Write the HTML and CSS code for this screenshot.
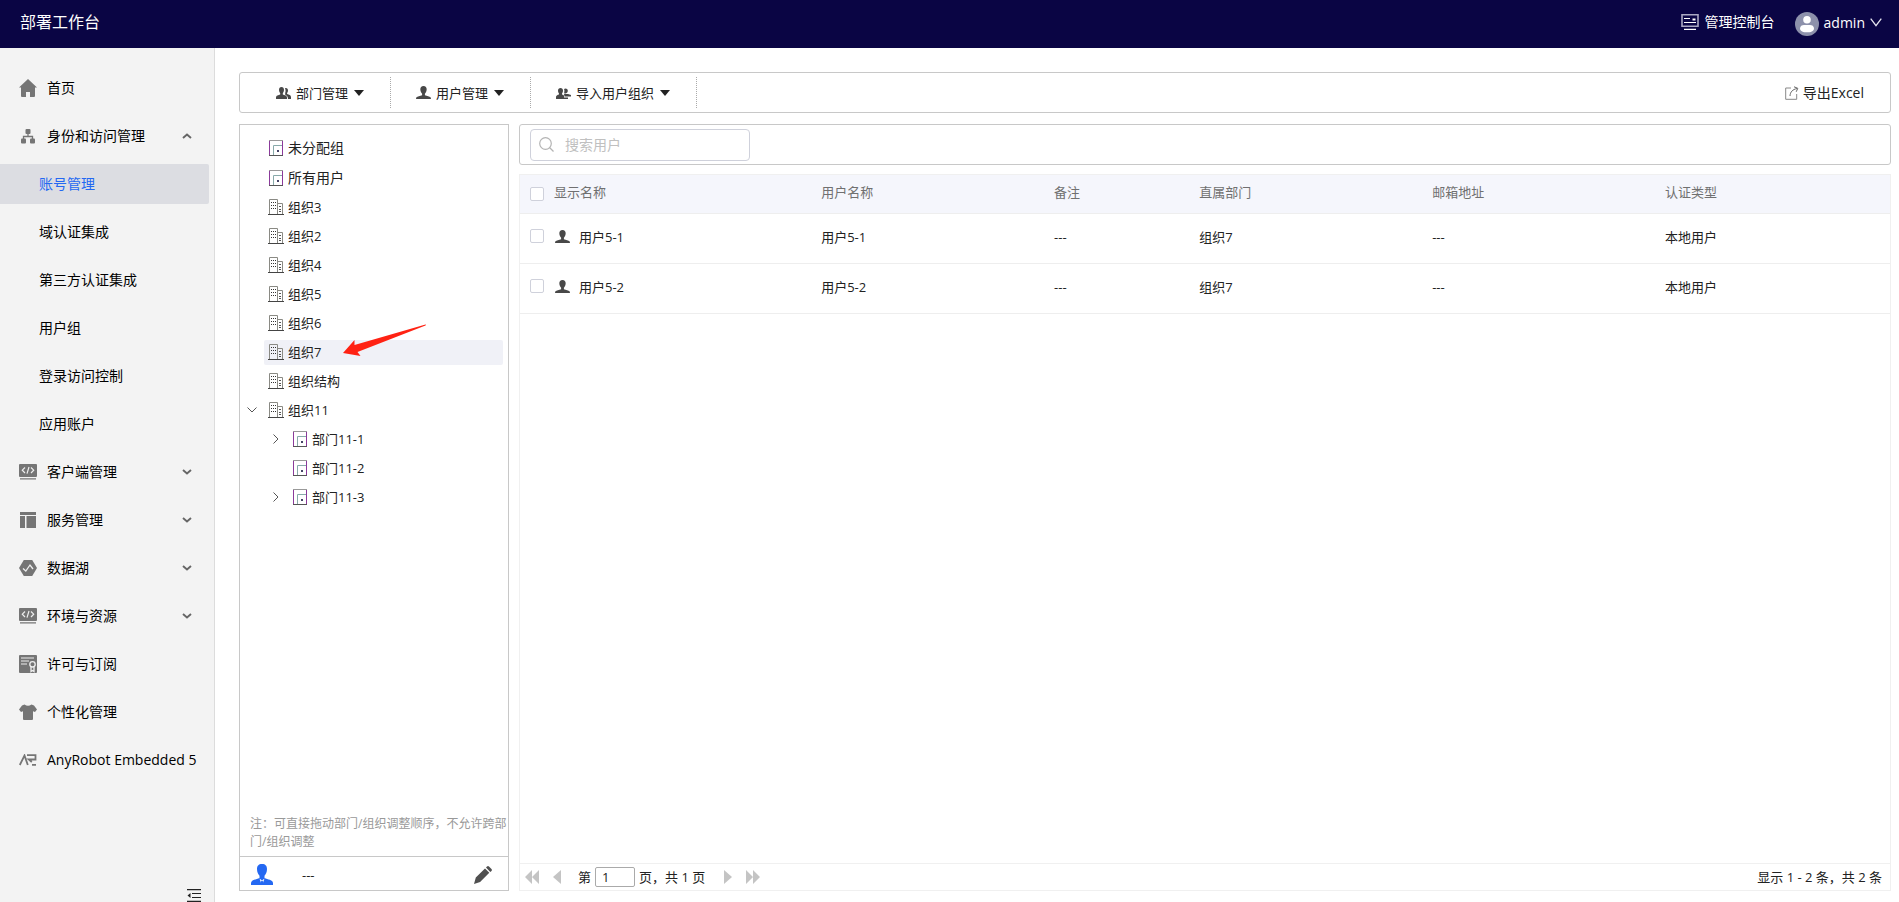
FILE: index.html
```html
<!DOCTYPE html>
<html lang="zh-CN">
<head>
<meta charset="utf-8">
<title>部署工作台</title>
<link rel="stylesheet" href="styles.css">
</head>
<body>
<svg class="sprite" aria-hidden="true">
  <symbol id="i-dept" viewBox="0 0 16 16"><path d="M1 .5h13v15H1z" fill="#fff"/><path d="M1.500 15.500V1M14.500 1v14.500" fill="none" stroke="#8b3a9b"/><path d="M1 .5h14" stroke="#999"/><path d="M1 15.500h14" stroke="#555"/><path d="M5.500 15V5.500H14" fill="none" stroke="#8aa"/><path d="M9 10h2v2H9z" fill="#446"/></symbol>
  <symbol id="i-org" viewBox="0 0 16 16"><path d="M1.500 15V.500h8V15M10 4.500h4.500V15" fill="none" stroke="#8a8a84"/><path d="M0 15.500h16" stroke="#444"/><path d="M3 3.500h5M3 6.500h5M3 9.500h5" stroke="#333" stroke-dasharray="1 1"/><path d="M11 7.500h2M11 10.500h2M11 12.500h2" stroke="#555"/></symbol>
  <symbol id="i-person" viewBox="0 0 16 15"><path d="M8 0c2.300 0 3.400 1.600 3.400 3.600 0 1.900-.8 3.600-1.900 4.600v1.600c2.200.6 5 1.200 6 2.300.4.500.5 1 .5 1.900H0c0-.9.100-1.400.5-1.900 1-1.100 3.800-1.700 6-2.300V8.200C5.400 7.200 4.600 5.500 4.600 3.600 4.600 1.600 5.700 0 8 0z" fill="#484848"/></symbol>
  <symbol id="i-down" viewBox="0 0 10 6"><path d="M1 1 5 4.500 9 1" fill="none" stroke="#666" stroke-width="1.900"/></symbol>
  <symbol id="i-caret" viewBox="0 0 10 6"><path d="M0 0h10L5 6z" fill="#222"/></symbol>
  <symbol id="i-code" viewBox="0 0 18 16"><path d="M1 0h16q1 0 1 1v11q0 1-1 1H1q-1 0-1-1V1q0-1 1-1zM1 14.200h16v1.300H1z" fill="#757575"/><path d="M6 3.500 3.300 6.200 6 9M12 3.500l2.700 2.700L12 9M10 3 8 9.700" fill="none" stroke="#eee" stroke-width="1.200"/></symbol>
  <symbol id="i-left" viewBox="0 0 8 14"><path d="M8 0v14L0 7z" fill="#c4c4c4"/></symbol>
</svg>

<header class="topbar">
  <h1 class="brand">部署工作台</h1>
  <div class="topbar-actions">
    <a class="console-link" href="#">
      <svg width="18" height="16" viewBox="0 0 18 16"><path d="M1 .8h16v11.400H1z" fill="none" stroke="#aaa8c2" stroke-width="1.600"/><path d="M3 4.500h6M3 8.500h12M3 15.300h12" stroke="#fff" stroke-width="1.200"/><path d="M11.500 4.500h3v2h-3z" fill="#fff"/></svg>
      管理控制台</a>
    <button class="account" type="button">
      <svg width="24" height="24" viewBox="0 0 24 24"><circle cx="12" cy="12" r="12" fill="#8d91ab"/><circle cx="12" cy="7.800" r="3.800" fill="#fff"/><path d="M5 16.500c0-2.500 2-3.500 4-3.500h6c2 0 4 1 4 3.500 0 3-3.500 3.800-7 3.800s-7-.8-7-3.800z" fill="#fff"/></svg>
      <span>admin</span>
      <svg class="account-chevron" width="12" height="9" viewBox="0 0 12 9"><path d="m.7.700 5.300 7 5.300-7" fill="none" stroke="#e6e6f0" stroke-width="1.300"/></svg>
    </button>
  </div>
</header>

<div class="shell">
  <nav class="sidebar">
    <ul class="menu">
      <li><a class="item" href="#"><svg width="18" height="18" viewBox="0 0 18 18"><path d="m9 0 9 8.500h-2V17q0 1-1 1h-4v-5H7v5H3q-1 0-1-1V8.500H0z" fill="#757575"/></svg><span>首页</span></a></li>
      <li><a class="item" href="#"><svg width="18" height="18" viewBox="0 0 18 18"><g fill="#757575"><rect x="6.500" y="2" width="5" height="5" rx="1"/><rect x="2" y="11.500" width="5" height="5" rx="1"/><rect x="11" y="11.500" width="5" height="5" rx="1"/></g><path d="M9 6v3.500M4.500 12V9.500h9V12" fill="none" stroke="#757575" stroke-width="1.300"/></svg><span>身份和访问管理</span><svg class="chev up" width="10" height="6"><use href="#i-down"/></svg></a></li>
      <li><a class="item sub active" href="#">账号管理</a></li>
      <li><a class="item sub" href="#">域认证集成</a></li>
      <li><a class="item sub" href="#">第三方认证集成</a></li>
      <li><a class="item sub" href="#">用户组</a></li>
      <li><a class="item sub" href="#">登录访问控制</a></li>
      <li><a class="item sub" href="#">应用账户</a></li>
      <li><a class="item" href="#"><svg width="18" height="16"><use href="#i-code"/></svg><span>客户端管理</span><svg class="chev" width="10" height="6"><use href="#i-down"/></svg></a></li>
      <li><a class="item" href="#"><svg width="18" height="16" viewBox="0 0 18 16"><path d="M1 0h16v3H1zM1 4h5v12H1zM7.500 4H17v12H7.500z" fill="#757575"/></svg><span>服务管理</span><svg class="chev" width="10" height="6"><use href="#i-down"/></svg></a></li>
      <li><a class="item" href="#"><svg width="18" height="16" viewBox="0 0 18 16"><path d="M4.800 0h8.400L18 8l-4.800 8H4.800L0 8z" fill="#757575"/><path d="M4 8.500 6.800 11 11 5l3 4" fill="none" stroke="#eee" stroke-width="1.300"/></svg><span>数据湖</span><svg class="chev" width="10" height="6"><use href="#i-down"/></svg></a></li>
      <li><a class="item" href="#"><svg width="18" height="16"><use href="#i-code"/></svg><span>环境与资源</span><svg class="chev" width="10" height="6"><use href="#i-down"/></svg></a></li>
      <li><a class="item" href="#"><svg width="18" height="18" viewBox="0 0 18 18"><rect width="18" height="18" rx="1" fill="#757575"/><path d="M2 3h13M2 6h8M2 9h6" stroke="#eee" stroke-width="1.200"/><circle cx="13.500" cy="9.300" r="2.700" fill="none" stroke="#eee" stroke-width="1.300"/><path d="M12 12v4.500l1.500-1 1.500 1V12" fill="none" stroke="#eee" stroke-width="1.300"/></svg><span>许可与订阅</span></a></li>
      <li><a class="item" href="#"><svg width="18" height="16" viewBox="0 0 18 16"><path d="M5.500.5Q9 3 12.500.5L15 1.500l3 4-2 2.500-2-.8V15q0 1-1 1H5q-1 0-1-1V7.200L2 8 0 5.500l3-4z" fill="#757575"/></svg><span>个性化管理</span></a></li>
      <li><a class="item" href="#"><svg width="18" height="12" viewBox="0 0 18 12"><path d="M.8 11 5.500 1.500 8.800 11M8 1.200h8.500v4.300H9.800l3 2.500M13 10.800h4" fill="none" stroke="#757575" stroke-width="1.800"/></svg><span>AnyRobot Embedded 5</span></a></li>
    </ul>
    <button class="collapse" type="button" aria-label="收起菜单"><svg width="14" height="13" viewBox="0 0 14 13"><path d="M0 .6h14M5 4.500h9M5 8.500h9M0 12.400h14" stroke="#222" stroke-width="1.200"/><path d="M3.500 4v5L.5 6.500z" fill="#222"/></svg></button>
  </nav>

  <main class="content">
    <div class="toolbar">
      <button class="tool" type="button"><svg width="15" height="14" viewBox="0 0 15 14"><path d="M5.500 1C7.200 1 8 2.200 8 3.800S7.400 6.500 6.800 7.200v1.200c1.700.5 4.200 1 4.200 3.100V13H0v-1.500C0 9.400 2.500 8.900 4.200 8.400V7.200C3.600 6.500 3 5.400 3 3.800S3.800 1 5.500 1zM9 2c2-.5 3 .6 3 2.300 0 1.300-.4 2.200-.9 2.800v1c1.800.5 3.900 1 3.900 3V13h-3c0-2.500-1-3.400-2.800-4.300V7C9.800 5.500 9.600 3.500 9 2z" fill="#484848"/></svg><span>部门管理</span><svg class="caret" width="10" height="6"><use href="#i-caret"/></svg></button>
      <button class="tool" type="button"><svg width="15" height="14"><use href="#i-person"/></svg><span>用户管理</span><svg class="caret" width="10" height="6"><use href="#i-caret"/></svg></button>
      <button class="tool" type="button"><svg width="15" height="14" viewBox="0 0 15 14"><path d="M4.500 2C6 2 7 3 7 4.500S6.500 6.800 6 7.400v1c1 .3 2 .6 2 1.600V13H0v-2c0-1.500 1.500-2.200 3-2.600v-1C2.500 6.800 2 6 2 4.500S3 2 4.500 2zM9.500 2.500c1.500 0 2.300 1 2.300 2.200 0 1.300-.8 2.300-2 2.800H8.200C8.200 6 8.800 4 8 3zM8 8h4l3 1v1.500H8.500zM8 11.500h4V13H8z" fill="#484848"/></svg><span>导入用户组织</span><svg class="caret" width="10" height="6"><use href="#i-caret"/></svg></button>
      <button class="export" type="button"><svg width="14" height="14" viewBox="0 0 14 14"><path d="M6 2H.7v11.300h11V8" fill="none" stroke="#888"/><path d="M5 10c.2-4 2.500-6.500 7-7.500M9 .8l3.800 1.500-1.600 3.500" fill="none" stroke="#666"/></svg><span>导出Excel</span></button>
    </div>

    <div class="columns">
      <section class="org-panel">
        <ul class="tree">
          <li class="node root"><span class="toggle"></span><span class="label"><svg width="16" height="16"><use href="#i-dept"/></svg>未分配组</span></li>
          <li class="node root"><span class="toggle"></span><span class="label"><svg width="16" height="16"><use href="#i-dept"/></svg>所有用户</span></li>
          <li class="node"><span class="toggle"></span><span class="label"><svg width="16" height="16"><use href="#i-org"/></svg>组织3</span></li>
          <li class="node"><span class="toggle"></span><span class="label"><svg width="16" height="16"><use href="#i-org"/></svg>组织2</span></li>
          <li class="node"><span class="toggle"></span><span class="label"><svg width="16" height="16"><use href="#i-org"/></svg>组织4</span></li>
          <li class="node"><span class="toggle"></span><span class="label"><svg width="16" height="16"><use href="#i-org"/></svg>组织5</span></li>
          <li class="node"><span class="toggle"></span><span class="label"><svg width="16" height="16"><use href="#i-org"/></svg>组织6</span></li>
          <li class="node"><span class="toggle"></span><span class="label selected"><svg width="16" height="16"><use href="#i-org"/></svg>组织7<svg class="pointer" width="84" height="33" viewBox="0 0 84 33"><path d="m0 29 11.500-13v5L82.500.500q1 0 0 1L14.500 28l3 4z" fill="#ff2213"/></svg></span></li>
          <li class="node"><span class="toggle"></span><span class="label"><svg width="16" height="16"><use href="#i-org"/></svg>组织结构</span></li>
          <li class="node"><button class="toggle" type="button" aria-label="收起"><svg width="10" height="6" viewBox="0 0 10 6"><path d="m.5.500 4.500 4.500L9.500.500" fill="none" stroke="#555"/></svg></button><span class="label"><svg width="16" height="16"><use href="#i-org"/></svg>组织11</span></li>
          <li class="node child"><button class="toggle" type="button" aria-label="展开"><svg width="6" height="10" viewBox="0 0 6 10"><path d="m.5.500 4.500 4.500L.5 9.500" fill="none" stroke="#555"/></svg></button><span class="label"><svg width="16" height="16"><use href="#i-dept"/></svg>部门11-1</span></li>
          <li class="node child"><span class="toggle"></span><span class="label"><svg width="16" height="16"><use href="#i-dept"/></svg>部门11-2</span></li>
          <li class="node child"><button class="toggle" type="button" aria-label="展开"><svg width="6" height="10" viewBox="0 0 6 10"><path d="m.5.500 4.500 4.500L.5 9.500" fill="none" stroke="#555"/></svg></button><span class="label"><svg width="16" height="16"><use href="#i-dept"/></svg>部门11-3</span></li>
        </ul>
        <p class="note">注：可直接拖动部门/组织调整顺序，不允许跨部门/组织调整</p>
        <div class="manager">
          <svg width="22" height="21" viewBox="0 0 22 21"><path d="M11 0c3.500 0 5 2 5 5 0 3.200-1.200 5.400-2.500 6.800V14c3 1.500 8.500 1.800 8.500 5v2H0v-2c0-3.200 5.500-3.500 8.500-5v-2.200C7.200 10.400 6 8.200 6 5c0-3 1.500-5 5-5z" fill="#2468f2"/><path d="m8.500 14.500 2.500 2 2.500-2-1.500 4.500h-2z" fill="#fff"/><path d="m10 16.500 1 1 1-1 .8 4.500H9.200z" fill="#2468f2"/></svg>
          <span class="manager-name">---</span>
          <button class="edit" type="button" aria-label="编辑"><svg width="18" height="18" viewBox="0 0 18 18"><path d="M1.800 11.500 11 2.500l4.300 4.200-9.200 9.200L0 18zM12 1.500l1-1q1-.8 2 0L17.500 3q.8 1 0 2l-1.200 1z" fill="#505050"/></svg></button>
        </div>
      </section>

      <section class="users">
        <div class="search-bar">
          <label class="search"><svg width="15" height="15" viewBox="0 0 15 15"><circle cx="6.500" cy="6.500" r="5.800" fill="none" stroke="#b4b4b4" stroke-width="1.200"/><path d="m10.500 10.500 4 4" stroke="#b4b4b4" stroke-width="1.300"/></svg><input type="text" placeholder="搜索用户" aria-label="搜索用户"></label>
        </div>
        <div class="grid">
          <div class="grid-body">
            <table class="table">
              <colgroup><col class="c-check"><col class="c-name"><col class="c-wide"><col class="c-note"><col class="c-wide"><col class="c-wide"><col></colgroup>
              <thead><tr><th><input class="check" type="checkbox" aria-label="全选"></th><th>显示名称</th><th>用户名称</th><th>备注</th><th>直属部门</th><th>邮箱地址</th><th>认证类型</th></tr></thead>
              <tbody>
                <tr><td><input class="check" type="checkbox" aria-label="选择 用户5-1"></td><td><span class="user"><svg width="15" height="14"><use href="#i-person"/></svg>用户5-1</span></td><td>用户5-1</td><td>---</td><td>组织7</td><td>---</td><td>本地用户</td></tr>
                <tr><td><input class="check" type="checkbox" aria-label="选择 用户5-2"></td><td><span class="user"><svg width="15" height="14"><use href="#i-person"/></svg>用户5-2</span></td><td>用户5-2</td><td>---</td><td>组织7</td><td>---</td><td>本地用户</td></tr>
              </tbody>
            </table>
          </div>
          <footer class="pager">
            <button type="button" aria-label="首页"><svg width="14" height="14" viewBox="0 0 14 14"><path d="M7 0v14L0 7zM14 0v14L7 7z" fill="#c4c4c4"/></svg></button>
            <button type="button" aria-label="上一页"><svg width="8" height="14"><use href="#i-left"/></svg></button>
            <label class="page">第<input type="text" value="1">页，共 1 页</label>
            <button type="button" aria-label="下一页"><svg class="flip" width="8" height="14"><use href="#i-left"/></svg></button>
            <button type="button" aria-label="末页"><svg class="flip" width="14" height="14" viewBox="0 0 14 14"><path d="M7 0v14L0 7zM14 0v14L7 7z" fill="#c4c4c4"/></svg></button>
            <span class="summary">显示 1 - 2 条，共 2 条</span>
          </footer>
        </div>
      </section>
    </div>
  </main>
</div>
</body>
</html>
```

FILE: styles.css
```css
* { box-sizing: border-box; }

body {
  margin: 0;
  height: 100vh;
  display: flex;
  flex-direction: column;
  background: #fff;
  color: #222;
  font: 13px/20px "Open Sans", "Noto Sans CJK SC", sans-serif;
}

button, input { font: inherit; color: inherit; }
button { padding: 0; border: 0; background: none; cursor: pointer; }
a { color: inherit; text-decoration: none; }
ul { margin: 0; padding: 0; list-style: none; }
svg { display: block; flex: none; }
.sprite { position: absolute; width: 0; height: 0; }

/* Top bar */
.topbar {
  flex: none;
  height: 48px;
  padding: 0 17px 0 20px;
  display: flex;
  align-items: center;
  justify-content: space-between;
  background: #0a0544;
  color: #fff;
}
.brand { margin: 0 0 4px; font-size: 16px; font-weight: 400; }
.topbar-actions { display: flex; align-items: center; gap: 20px; font-size: 14px; }
.console-link { display: flex; align-items: center; gap: 6px; margin-bottom: 4px; }
.account { display: flex; align-items: center; gap: 5px; }
.account span { margin-bottom: 2px; }
.account-chevron { margin-bottom: 4px; }

/* Side menu */
.shell { flex: 1; min-height: 0; display: flex; }
.sidebar {
  flex: none;
  width: 215px;
  display: flex;
  flex-direction: column;
  justify-content: space-between;
  background: #f3f3f3;
  border-right: 1px solid #dcdcdc;
  color: #000;
  font-size: 14px;
}
.menu { padding: 20px 5px 0 0; display: grid; grid-template-columns: minmax(0, 1fr); gap: 8px; }
.item {
  height: 40px;
  padding: 0 17px 0 19px;
  display: flex;
  align-items: center;
  gap: 10px;
  border-radius: 0 2px 2px 0;
  white-space: nowrap;
}
.item.sub { padding-left: 39px; }
.item.active { background: #dcdde2; color: #2468f2; }
.chev { margin-left: auto; }
.chev.up { transform: rotate(180deg); }
.collapse { align-self: flex-end; margin-right: 13px; }

/* Content */
.content {
  flex: 1;
  min-width: 0;
  padding: 24px 8px 11px 24px;
  display: flex;
  flex-direction: column;
  gap: 11px;
}
.toolbar {
  flex: none;
  height: 41px;
  padding: 4px 26px 4px 11px;
  display: flex;
  border: 1px solid #c8c8c8;
  border-radius: 3px;
}
.tool {
  padding: 0 27px 0 25px;
  display: flex;
  align-items: center;
  gap: 5px;
  background: repeating-linear-gradient(#aaa 0 1px, #fff 1px 2px) right / 1px 100% no-repeat;
}
.caret { margin-left: 1px; }
.export { margin-left: auto; display: flex; align-items: center; gap: 4px; font-size: 14px; }

.columns { flex: 1; min-height: 0; display: flex; gap: 10px; }

/* Organisation tree */
.org-panel {
  flex: none;
  width: 270px;
  display: flex;
  flex-direction: column;
  border: 1px solid #c8c8c8;
}
.tree { flex: 1; padding: 10px 5px 0 4px; }
.node { display: flex; gap: 4px; height: 25px; margin-bottom: 4px; }
.node.root { height: 26px; font-size: 14px; }
.node.child { padding-left: 24px; }
.toggle { flex: none; width: 16px; padding-bottom: 2px; display: flex; align-items: center; justify-content: center; }
.label { flex: 1; position: relative; padding: 0 0 2px 4px; display: flex; align-items: center; gap: 4px; border-radius: 2px; }
.root .label { padding-bottom: 0; }
.label.selected { background: #f0f1f7; }
.pointer { position: absolute; left: 79px; top: -16px; }
.note { margin: 0; padding: 0 0 5px 10px; color: #999; font-size: 12px; line-height: 18px; }
.manager {
  height: 34px;
  padding: 2px 16px 0 11px;
  display: flex;
  align-items: center;
  border-top: 1px solid #c8c8c8;
}
.manager-name { margin-left: 29px; }
.edit { margin-left: auto; }

/* User list */
.users { flex: 1; min-width: 0; display: flex; flex-direction: column; gap: 9px; }
.search-bar { flex: none; height: 41px; padding: 4px 10px; border: 1px solid #c8c8c8; border-radius: 3px; }
.search {
  width: 220px;
  height: 32px;
  padding: 0 8px;
  display: flex;
  align-items: center;
  gap: 11px;
  border: 1px solid #cfd1db;
  border-radius: 4px;
  font-size: 14px;
}
.search svg { margin-bottom: 2px; }
.search input { flex: 1; min-width: 0; padding: 0; border: 0; outline: 0; background: none; }
.search input::placeholder { color: #c0c0c0; }

.grid { flex: 1; min-height: 0; display: flex; flex-direction: column; border: 1px solid #f0f0f0; }
.grid-body { flex: 1; min-height: 0; }
.table { width: 100%; table-layout: fixed; border-collapse: collapse; }
.c-check { width: 29px; }
.c-name { width: 19.5%; }
.c-wide { width: 17%; }
.c-note { width: 10.6%; }
.table th { height: 38px; padding: 0 0 4px 5px; background: #f5f6fc; color: #707070; font-weight: 400; text-align: left; border-bottom: 1px solid #eee; }
.table td { height: 50px; padding: 0 0 2px 5px; border-bottom: 1px solid #eee; }
.table th:first-child { padding: 0 0 0 10px; }
.table td:first-child { padding: 0 0 4px 10px; }
.user { padding-left: 1px; display: flex; align-items: center; gap: 9px; }
.check {
  display: block;
  appearance: none;
  width: 14px;
  height: 14px;
  margin: 0;
  background: #fff;
  border: 1px solid #cfd1db;
  border-radius: 2px;
}

.pager {
  height: 27px;
  padding: 0 8px 0 5px;
  display: flex;
  align-items: center;
  gap: 14px;
  border-top: 1px solid #f0f0f0;
}
.page { display: flex; align-items: center; gap: 4px; margin: 0 5px 0 3px; white-space: nowrap; }
.page input { width: 40px; height: 20px; padding: 0 6px; border: 1px solid #aaa; border-radius: 2px; }
.flip { transform: scaleX(-1); }
.summary { margin-left: auto; }
```
